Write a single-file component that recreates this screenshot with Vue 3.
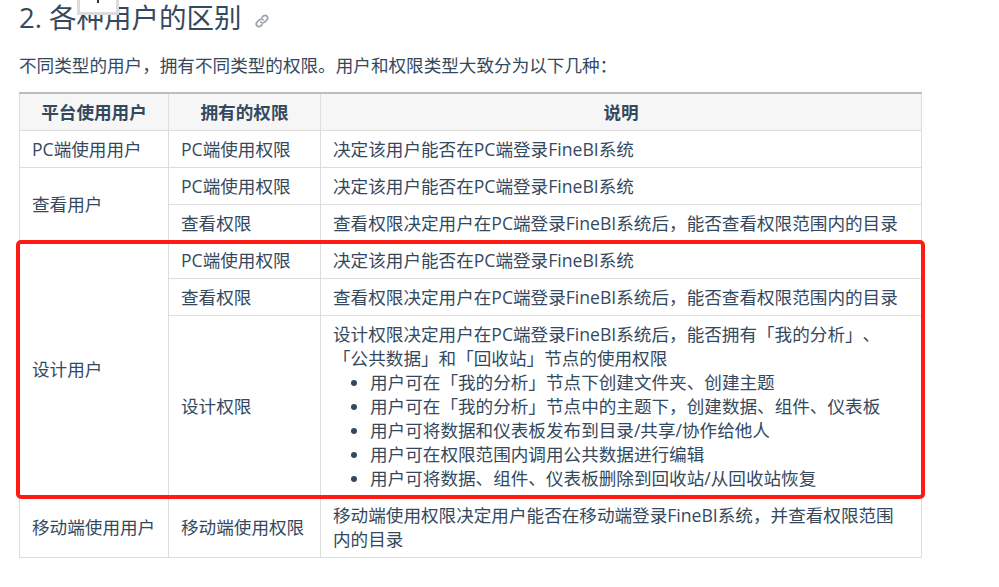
<script setup>
const bullets = [
  '用户可在「我的分析」节点下创建文件夹、创建主题',
  '用户可在「我的分析」节点中的主题下，创建数据、组件、仪表板',
  '用户可将数据和仪表板发布到目录/共享/协作给他人',
  '用户可在权限范围内调用公共数据进行编辑',
  '用户可将数据、组件、仪表板删除到回收站/从回收站恢复',
]
const loginPc = '决定该用户能否在PC端登录FineBI系统'
const viewDesc = '查看权限决定用户在PC端登录FineBI系统后，能否查看权限范围内的目录'
</script>

<template>
  <div class="page">
    <div class="tooltip"><span class="tick"></span></div>
    <h2 class="title">
      2. 各种用户的区别
      <svg class="link" viewBox="0 0 16 16" width="16" height="16" fill="none" stroke="#9aa5b1" stroke-width="1.7" stroke-linecap="round">
        <path d="M6.8 9.2a2.6 2.6 0 0 0 3.7 0l2.4-2.4a2.6 2.6 0 0 0-3.7-3.7L8 4.3" />
        <path d="M9.2 6.8a2.6 2.6 0 0 0-3.7 0L3.1 9.2a2.6 2.6 0 0 0 3.7 3.7L8 11.7" />
      </svg>
    </h2>
    <p class="intro">不同类型的用户，拥有不同类型的权限。用户和权限类型大致分为以下几种：</p>
    <div class="table-wrap">
      <table>
        <colgroup>
          <col class="c1" />
          <col class="c2" />
          <col />
        </colgroup>
        <thead>
          <tr><th>平台使用用户</th><th>拥有的权限</th><th>说明</th></tr>
        </thead>
        <tbody>
          <tr><td>PC端使用用户</td><td>PC端使用权限</td><td>{{ loginPc }}</td></tr>
          <tr><td rowspan="2" class="lift">查看用户</td><td>PC端使用权限</td><td>{{ loginPc }}</td></tr>
          <tr><td>查看权限</td><td>{{ viewDesc }}</td></tr>
          <tr><td rowspan="3">设计用户</td><td>PC端使用权限</td><td>{{ loginPc }}</td></tr>
          <tr><td>查看权限</td><td>{{ viewDesc }}</td></tr>
          <tr>
            <td>设计权限</td>
            <td>
              设计权限决定用户在PC端登录FineBI系统后，能否拥有「我的分析」、<br />「公共数据」和「回收站」节点的使用权限
              <ul>
                <li v-for="b in bullets" :key="b">{{ b }}</li>
              </ul>
            </td>
          </tr>
          <tr>
            <td>移动端使用用户</td>
            <td>移动端使用权限</td>
            <td>移动端使用权限决定用户能否在移动端登录FineBI系统，并查看权限范围内的目录</td>
          </tr>
        </tbody>
      </table>
      <div class="highlight"></div>
    </div>
  </div>
</template>

<style scoped>
.page {
  position: relative;
  width: 999px;
  height: 587px;
  overflow: hidden;
  background: #fff;
  padding: 0 0 0 19px;
  box-sizing: border-box;
  color: #34495e;
  font-family: "Open Sans", "Noto Sans CJK SC", sans-serif;
  font-size: 17.6px;
  line-height: 24px;
  text-spacing-trim: space-all;
}
.tooltip {
  position: absolute;
  left: 77px;
  top: -3px;
  width: 42px;
  height: 18px;
  box-sizing: border-box;
  background: #fff;
  border: 3px solid #dcdcdc;
}
.tick {
  position: absolute;
  left: 17px;
  top: 0;
  width: 2px;
  height: 3px;
  background: #333;
}
.title {
  margin: 0;
  padding-top: 2px;
  height: 34px;
  font-size: 27.5px;
  line-height: 32px;
  font-weight: 400;
  white-space: nowrap;
}
.link {
  vertical-align: -1px;
  margin-left: 5px;
}
.intro {
  margin: 0;
  padding-top: 17px;
  height: 39px;
}
.table-wrap {
  position: relative;
  width: 903px;
}
table {
  border-collapse: collapse;
  table-layout: fixed;
  width: 903px;
  border-top: 2px solid #bdbdbd;
}
.c1 {
  width: 149px;
}
.c2 {
  width: 152px;
}
th,
td {
  border: 1px solid #ddd;
  padding: 6px 12px;
  text-align: left;
  vertical-align: middle;
  font-weight: 400;
}
td.lift {
  padding-bottom: 8px;
}
thead tr {
  background: #f6f6f6;
}
th {
  text-align: center;
  font-weight: 700;
}
thead th {
  border-top: none;
}
ul {
  margin: 0;
  padding: 0 0 0 37px;
}
.highlight {
  position: absolute;
  left: -3px;
  top: 148px;
  width: 909px;
  height: 259px;
  box-sizing: border-box;
  border: 4.5px solid #ff1a12;
  border-radius: 5px;
  pointer-events: none;
}
</style>
